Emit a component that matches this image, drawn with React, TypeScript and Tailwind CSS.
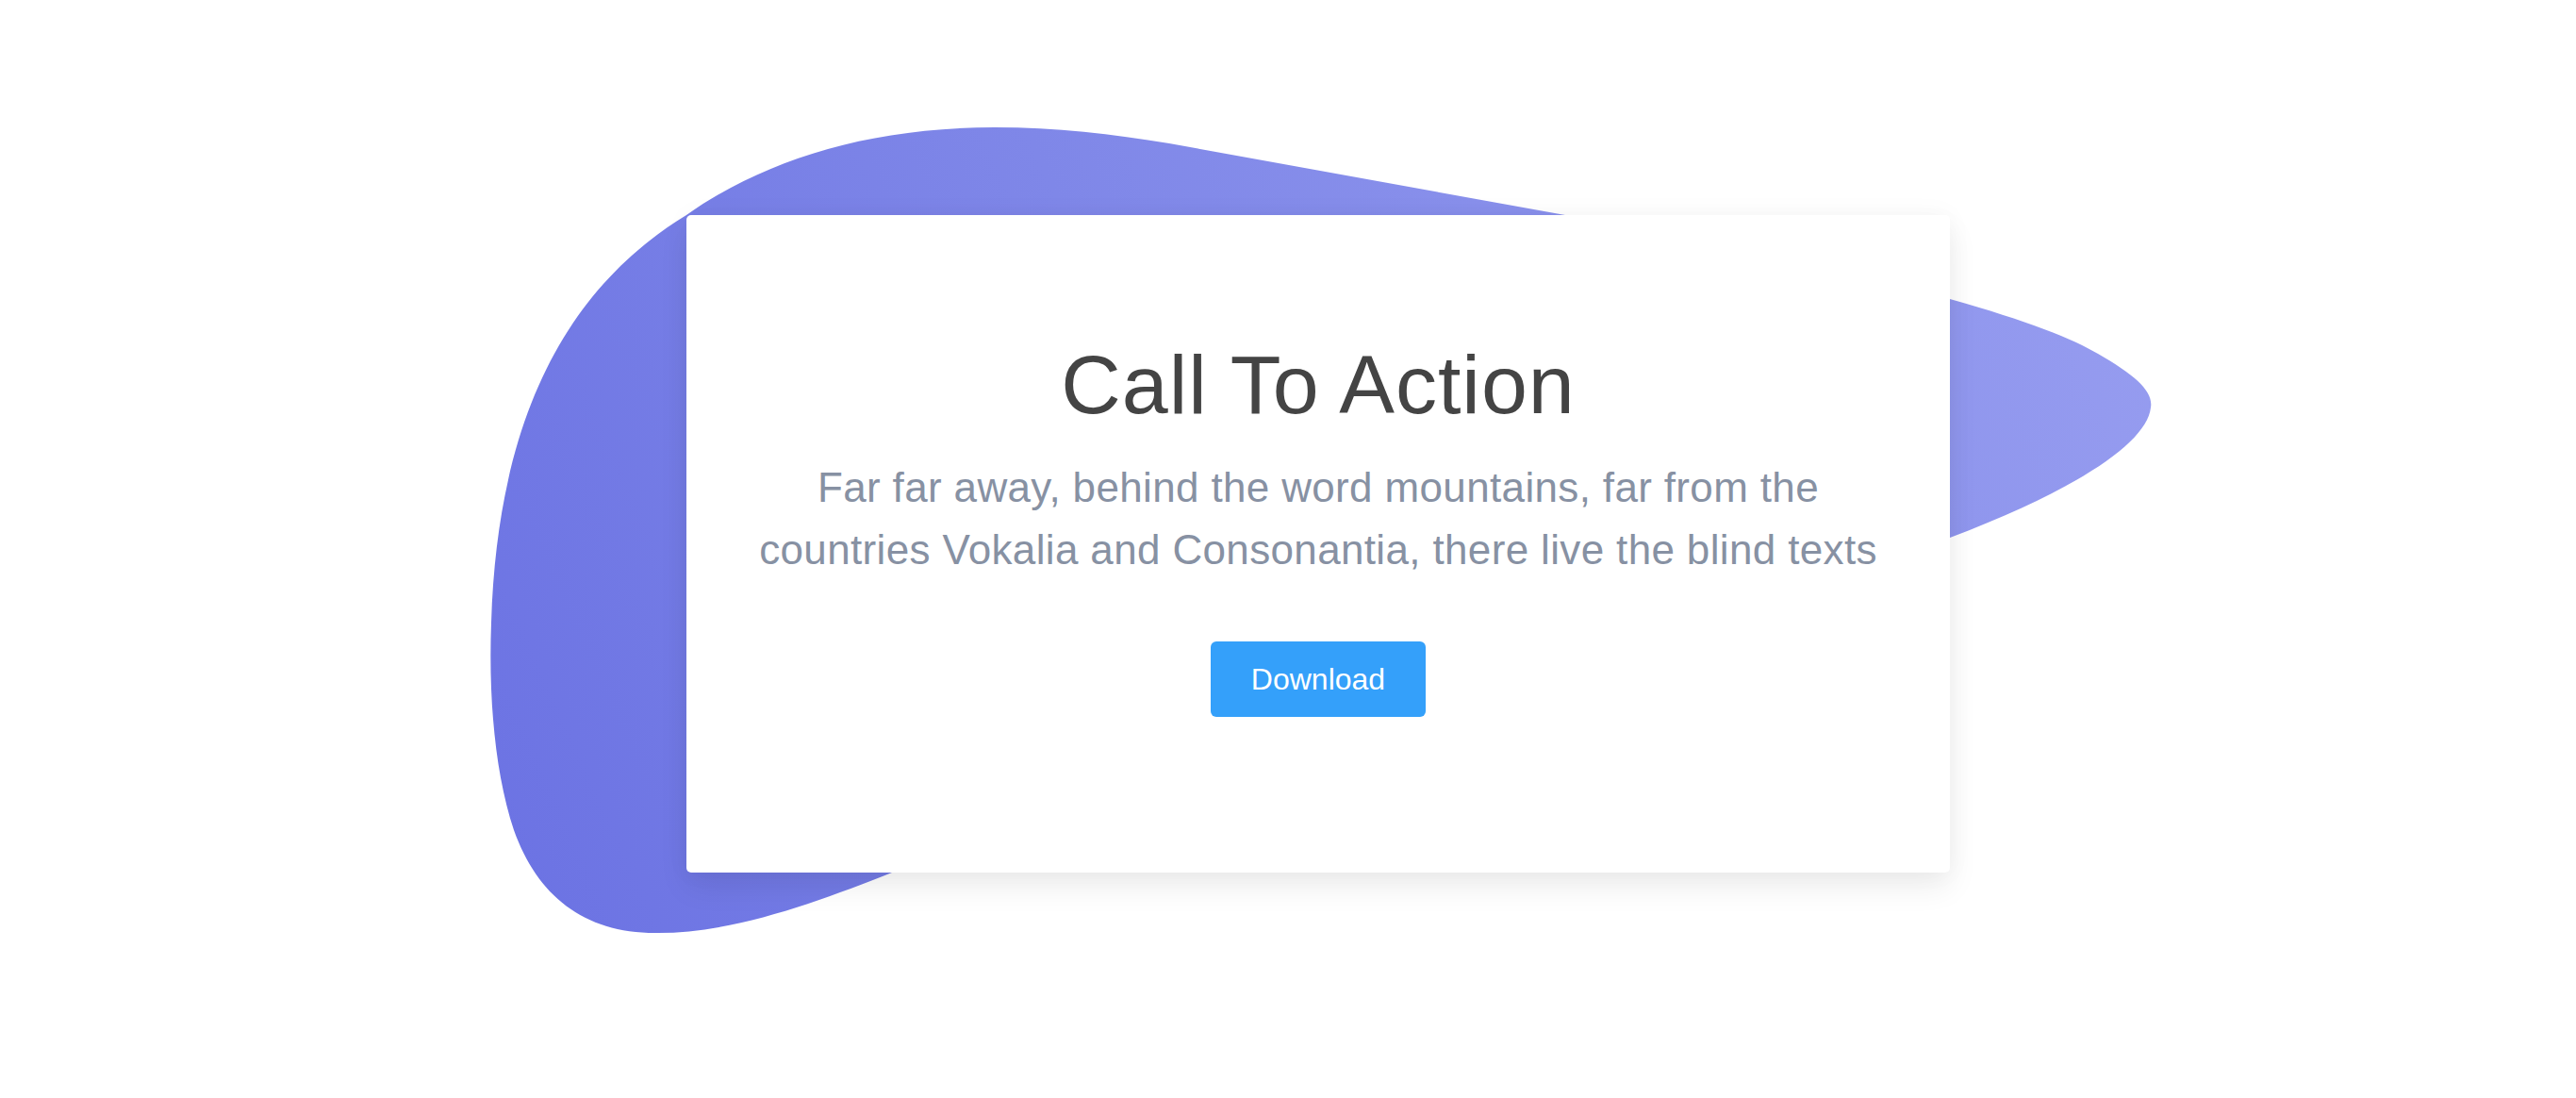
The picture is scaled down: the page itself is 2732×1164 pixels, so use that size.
export default function App() {
  return (
    <div className="relative h-[1164px] w-full overflow-hidden bg-white" style={{ fontFamily: '"Liberation Sans", Arial, sans-serif' }}>
      {/* Background blob */}
      <svg
        className="absolute left-0 top-0"
        width="2732"
        height="1164"
        viewBox="0 0 2732 1164"
        fill="none"
      >
        <defs>
          <linearGradient id="blob" x1="520" y1="990" x2="2280" y2="200" gradientUnits="userSpaceOnUse">
            <stop offset="0" stopColor="#6b72e3" />
            <stop offset="0.45" stopColor="#7f87e8" />
            <stop offset="1" stopColor="#979df0" />
          </linearGradient>
        </defs>
        <path
          d="M1055 135 C1120 135 1180 142 1240 152 L1660 228 L2068 317 C2150 340 2200 360 2225 375 C2265 398 2284 415 2281 432 C2277 470 2200 520 2068 570 L946 925 C870 955 780 989 698 989 C620 990 570 950 545 880 C525 820 518 740 521 660 C528 430 610 300 728 228 C810 170 920 135 1055 135 Z"
          fill="url(#blob)"
        />
      </svg>

      <div className="relative flex pl-[728px] pt-[228px]">
        {/* Card */}
        <div className="flex h-[697px] w-[1340px] flex-col items-center rounded-[5px] bg-white px-[56px] pt-[136px] text-center shadow-[0_0_28px_rgba(0,0,0,0.04),0_16px_32px_rgba(0,0,0,0.07)]">
          <h1 className="text-[88px] leading-none font-normal tracking-[1px] text-[#444444]">Call To Action</h1>
          <p className="mt-[32px] text-[44px] leading-[66px] tracking-[0.35px] text-[#8791a3]">
            Far far away, behind the word mountains, far from the countries Vokalia and Consonantia, there live the blind texts
          </p>
          <button className="mt-[64px] h-[80px] w-[228px] rounded-[6px] bg-[#34a0fa] text-[32px] leading-none text-white">
            Download
          </button>
        </div>
      </div>
    </div>
  )
}
